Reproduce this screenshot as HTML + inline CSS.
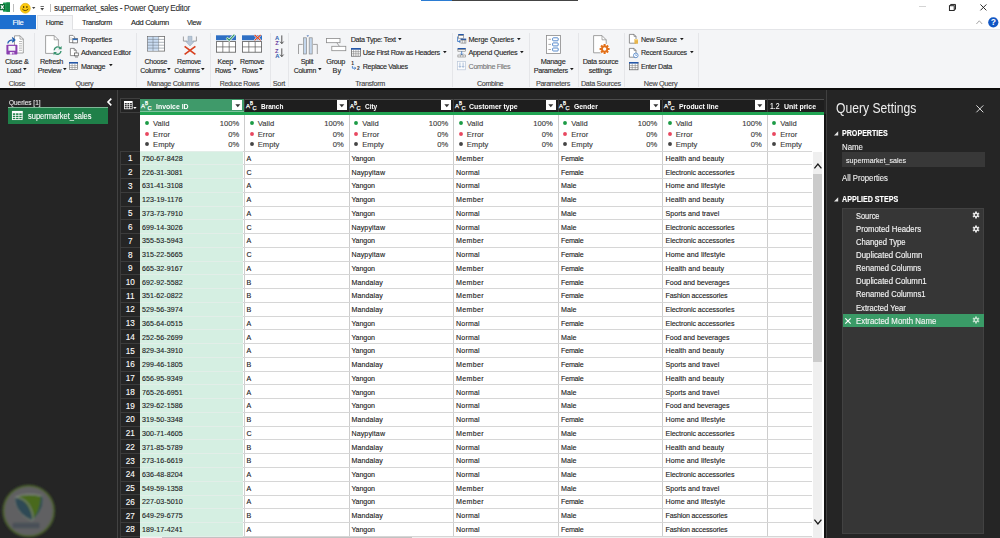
<!DOCTYPE html>
<html><head><meta charset="utf-8"><title>supermarket_sales - Power Query Editor</title>
<style>
html,body{margin:0;padding:0;}
body{width:1000px;height:538px;overflow:hidden;position:relative;background:#fff;font-family:"Liberation Sans",sans-serif;}
.b{position:absolute;}
.t{position:absolute;white-space:nowrap;-webkit-text-stroke:0.12px currentColor;}
.tc{transform:translateX(-50%);}
.tr{transform:translateX(-100%);}
svg{position:absolute;overflow:visible;}
</style></head><body>

<div class="b" style="left:421px;top:0px;width:31px;height:1.3px;background:#2b7cd3;"></div>
<div class="b" style="left:452px;top:0px;width:126px;height:1.3px;background:#444;"></div>
<svg style="left:0;top:2px" width="11" height="11" viewBox="0 0 11 11"><rect x="3" y="0.4" width="7" height="9.400" rx="0.6" fill="#1e9e55"/><path d="M6.400 0.4h3.600v9.400H6.400z" fill="#178a48"/><path d="M3 2.800h7M3 5.100h7M3 7.400h7" stroke="#0f7038" stroke-width="0.5" opacity="0.6"/><rect x="-1" y="2" width="6" height="6.200" rx="0.5" fill="#0d6b35"/><path d="M0.900 3.300l2.700 3.600M3.600 3.300L0.900 6.900" stroke="#fff" stroke-width="1.100"/></svg>
<div class="b" style="left:13px;top:3.6px;width:0.9px;height:8.2px;background:#bdbdbd;"></div>
<svg style="left:20.2px;top:2.5px" width="11" height="11" viewBox="0 0 11 11"><circle cx="5.3" cy="5.3" r="5" fill="#fbc80e" stroke="#d9a400" stroke-width="0.5"/><ellipse cx="3.7" cy="3.9" rx="0.65" ry="1" fill="#3a2a00"/><ellipse cx="6.9" cy="3.9" rx="0.65" ry="1" fill="#3a2a00"/><path d="M2.3 6q3 3.2 6 0" stroke="#3a2a00" stroke-width="0.8" fill="none"/></svg>
<svg style="left:32px;top:7px" width="4" height="3" viewBox="0 0 4 3"><path d="M0 0h3.4L1.7 2z" fill="#444"/></svg>
<svg style="left:39.5px;top:5.5px" width="5" height="5" viewBox="0 0 5 5"><path d="M0.5 0.5h3.4" stroke="#444" stroke-width="0.8"/><path d="M0.3 2h3.8L2.2 4.4z" fill="#444"/></svg>
<div class="b" style="left:50px;top:3.6px;width:0.9px;height:8.2px;background:#bdbdbd;"></div>
<span class="t" style="left:54px;top:3px;font-size:8.3px;line-height:10px;color:#2b2b2b;letter-spacing:-0.37px;-webkit-text-stroke:0.05px currentColor;">supermarket_sales - Power Query Editor</span>
<div class="b" style="left:919px;top:6.2px;width:7px;height:0.9px;background:#d4d4d4;"></div>
<svg style="left:949px;top:3.8px" width="7.2" height="7.2" viewBox="0 0 8 8"><path d="M1.8 1.8V0.5H7.2V5.9H5.9" fill="none" stroke="#222" stroke-width="1.1"/><rect x="0.5" y="1.9" width="5.3" height="5.3" fill="none" stroke="#222" stroke-width="1.1"/></svg>
<svg style="left:979.6px;top:3.8px" width="7" height="7" viewBox="0 0 8 8"><path d="M0.5 0.5L7.3 7.3M7.3 0.5L0.5 7.3" stroke="#222" stroke-width="1.1"/></svg>
<svg style="left:976px;top:20px" width="7" height="5" viewBox="0 0 7 5"><path d="M0.4 4L3.3 0.8L6.2 4" fill="none" stroke="#9a9a9a" stroke-width="0.9"/></svg>
<svg style="left:987.7px;top:17px" width="11" height="11" viewBox="0 0 11 11"><circle cx="5.3" cy="5.3" r="5.1" fill="#1157c4"/><text x="5.3" y="8.3" font-size="8.5" font-weight="700" fill="#fff" text-anchor="middle" font-family="Liberation Sans, sans-serif">?</text></svg>
<div class="b" style="left:0px;top:15px;width:36.3px;height:14.6px;background:#1e6fcf;"></div>
<span class="t tc" style="left:18px;top:18px;font-size:7.56px;line-height:9px;color:#fff;letter-spacing:-0.34px;">File</span>
<div class="b" style="left:37.3px;top:15.2px;width:35.5px;height:15px;background:#f4f5f7;border:1px solid #e0e1e3;border-bottom:none;box-sizing:border-box;"></div>
<span class="t tc" style="left:54.5px;top:19px;font-size:6.97px;line-height:7px;color:#222;letter-spacing:-0.314px;">Home</span>
<span class="t tc" style="left:97px;top:18px;font-size:7.26px;line-height:9px;color:#222;letter-spacing:-0.327px;">Transform</span>
<span class="t tc" style="left:150px;top:18px;font-size:7.49px;line-height:9px;color:#222;letter-spacing:-0.337px;">Add Column</span>
<span class="t tc" style="left:194px;top:19px;font-size:7.03px;line-height:7px;color:#222;letter-spacing:-0.316px;">View</span>
<div class="b" style="left:0px;top:29.2px;width:1000px;height:59.2px;background:#f4f5f7;border-top:1px solid #e4e5e8;box-sizing:border-box;"></div>
<div class="b" style="left:38.3px;top:29px;width:33.5px;height:2px;background:#f4f5f7;"></div>
<div class="b" style="left:34px;top:33px;width:1px;height:54px;background:#e5e6e9;"></div>
<div class="b" style="left:135.6px;top:33px;width:1px;height:54px;background:#e5e6e9;"></div>
<div class="b" style="left:209.5px;top:33px;width:1px;height:54px;background:#e5e6e9;"></div>
<div class="b" style="left:269.5px;top:33px;width:1px;height:54px;background:#e5e6e9;"></div>
<div class="b" style="left:288.4px;top:33px;width:1px;height:54px;background:#e5e6e9;"></div>
<div class="b" style="left:452px;top:33px;width:1px;height:54px;background:#e5e6e9;"></div>
<div class="b" style="left:529px;top:33px;width:1px;height:54px;background:#e5e6e9;"></div>
<div class="b" style="left:577.5px;top:33px;width:1px;height:54px;background:#e5e6e9;"></div>
<div class="b" style="left:624px;top:33px;width:1px;height:54px;background:#e5e6e9;"></div>
<div class="b" style="left:697.8px;top:33px;width:1px;height:54px;background:#e5e6e9;"></div>
<svg style="left:5.5px;top:34.5px" width="19" height="21" viewBox="0 0 19 21"><path d="M8.5 0.8h5.6l3.2 3.2v14H8.5z" fill="#fff" stroke="#8a8a8a" stroke-width="0.8"/><path d="M14 0.8v3.3h3.3" fill="none" stroke="#8a8a8a" stroke-width="0.7"/><path d="M13 6.5h3M13 8.7h3M13 10.9h3M13 13.1h3M13 15.3h3" stroke="#9a9a9a" stroke-width="0.7"/><rect x="0.4" y="9.8" width="11" height="9.800" rx="0.8" fill="#8a3fb0"/><rect x="2.400" y="10.900" width="7" height="4.800" fill="#f4f5f7"/><rect x="3.800" y="17" width="4.400" height="2.600" fill="#efe6f5"/><rect x="6.300" y="17.500" width="1.200" height="2.100" fill="#8a3fb0"/><path d="M1.8 8.5q0.5-3.6 6-3.6M6.2 2.6l2.6 2.3l-2.6 2.3" fill="none" stroke="#1f5fb0" stroke-width="1.3"/></svg>
<span class="t" style="left:4.9px;top:57px;font-size:7.3px;line-height:9px;color:#262626;letter-spacing:-0.271px;">Close &amp;</span>
<span class="t" style="left:6.7px;top:67px;font-size:7.02px;line-height:7px;color:#262626;letter-spacing:-0.316px;">Load</span>
<svg style="left:22.75px;top:68.3px" width="4" height="3" viewBox="0 0 4 3"><path d="M0 0h3.700L1.850 2.200z" fill="#1c1c1c"/></svg>
<span class="t" style="left:8.7px;top:80px;font-size:7.01px;line-height:7px;color:#444;letter-spacing:-0.316px;">Close</span>
<svg style="left:44.5px;top:34.5px" width="19" height="21" viewBox="0 0 19 21"><path d="M0.6 0.6h8.6l4.2 4.2v13.6H0.6z" fill="#fff" stroke="#8a8a8a" stroke-width="0.8"/><path d="M9.2 0.6v4.2h4.2" fill="none" stroke="#8a8a8a" stroke-width="0.7"/><circle cx="12.6" cy="15.6" r="4.6" fill="#f3f4f6"/><path d="M9.2 15.2a3.5 3.5 0 0 1 6-2.2" fill="none" stroke="#3a9470" stroke-width="1.4"/><path d="M16.6 10.9v3.4h-3.4z" fill="#3a9470"/><path d="M16 16a3.5 3.5 0 0 1-6 2.2" fill="none" stroke="#3a9470" stroke-width="1.4"/><path d="M8.6 20.3v-3.4h3.4z" fill="#3a9470"/></svg>
<span class="t" style="left:39.9px;top:57px;font-size:7.29px;line-height:9px;color:#262626;letter-spacing:-0.328px;">Refresh</span>
<span class="t" style="left:37.8px;top:67px;font-size:7.17px;line-height:8px;color:#262626;letter-spacing:-0.323px;">Preview</span>
<svg style="left:62.75px;top:68.3px" width="4" height="3" viewBox="0 0 4 3"><path d="M0 0h3.700L1.850 2.200z" fill="#1c1c1c"/></svg>
<svg style="left:69.3px;top:35px" width="9" height="8.5" viewBox="0 0 9 8.5"><path d="M0.4 0.4h3.6l1.6 1.6v5.6H0.4z" fill="#fff" stroke="#666" stroke-width="0.7"/><path d="M1.4 3h1.2M1.4 4.6h1.2" stroke="#777" stroke-width="0.6"/><rect x="3.8" y="3.6" width="4.7" height="4.3" fill="#fff" stroke="#555" stroke-width="0.7"/><rect x="3.8" y="3.6" width="4.7" height="1.5" fill="#2f6fc0"/></svg>
<span class="t" style="left:80.9px;top:35px;font-size:7.3px;line-height:9px;color:#262626;letter-spacing:-0.228px;">Properties</span>
<svg style="left:70px;top:48.3px" width="9" height="9.5" viewBox="0 0 9 9.5"><path d="M0.4 0.4h3.8l2 2v5.2H0.4z" fill="#fff" stroke="#666" stroke-width="0.7"/><path d="M4.2 0.4v2h2" fill="none" stroke="#666" stroke-width="0.6"/><rect x="4.5" y="5" width="3.8" height="2.8" fill="#fff" stroke="#555" stroke-width="0.7"/><path d="M5 9h3" stroke="#555" stroke-width="0.7"/></svg>
<span class="t" style="left:81px;top:48px;font-size:7.3px;line-height:9px;color:#262626;letter-spacing:-0.245px;">Advanced Editor</span>
<svg style="left:69.3px;top:62.3px" width="9" height="8" viewBox="0 0 9 8"><rect x="0.4" y="0.4" width="8.2" height="7" fill="#fff" stroke="#777" stroke-width="0.7"/><rect x="0" y="0" width="9" height="1.6" fill="#2457a8"/><path d="M0.4 3.6h8.2M0.4 5.5h8.2M3.1 1.6v5.8M5.9 1.6v5.8" stroke="#888" stroke-width="0.6"/></svg>
<span class="t" style="left:81px;top:62px;font-size:7.28px;line-height:9px;color:#262626;letter-spacing:-0.328px;">Manage</span>
<svg style="left:108.55px;top:64.3px" width="4" height="3" viewBox="0 0 4 3"><path d="M0 0h3.700L1.850 2.200z" fill="#1c1c1c"/></svg>
<span class="t" style="left:75.6px;top:80px;font-size:7.1px;line-height:8px;color:#444;letter-spacing:-0.32px;">Query</span>
<svg style="left:146.9px;top:36.1px" width="18" height="15.5" viewBox="0 0 18 15.5"><rect x="0.4" y="0.4" width="17.2" height="14.7" fill="#fff" stroke="#6e6e6e" stroke-width="0.8"/><rect x="0.8" y="0.8" width="10.6" height="13.9" fill="#c9dcf2"/><path d="M0.4 3.4h17.2M0.4 6.3h17.2M0.4 9.2h17.2M0.4 12.1h17.2M6 0.4v14.7M11.6 0.4v14.7" stroke="#707a86" stroke-width="0.55"/></svg>
<span class="t" style="left:144.5px;top:58px;font-size:7.1px;line-height:8px;color:#262626;letter-spacing:-0.319px;">Choose</span>
<span class="t" style="left:140.3px;top:67px;font-size:7.01px;line-height:7px;color:#262626;letter-spacing:-0.315px;">Columns</span>
<svg style="left:167.45px;top:68.3px" width="4" height="3" viewBox="0 0 4 3"><path d="M0 0h3.700L1.850 2.200z" fill="#1c1c1c"/></svg>
<svg style="left:182.6px;top:35.5px" width="14" height="19" viewBox="0 0 14 19"><path d="M0.4 0.5v4.6h3.8M13.4 0.5v4.6H9.8" fill="none" stroke="#8a8a8a" stroke-width="0.8"/><path d="M5 0.3h4v5.2h2.2L7 10L2.8 5.5H5z" fill="#b8c6d6" stroke="#8fa0b4" stroke-width="0.5"/><path d="M1.6 10.4l10.8 8M12.4 10.4l-10.8 8" stroke="#d8401f" stroke-width="1.7"/></svg>
<span class="t" style="left:177px;top:58px;font-size:6.91px;line-height:7px;color:#262626;letter-spacing:-0.311px;">Remove</span>
<span class="t" style="left:174.2px;top:67px;font-size:7.01px;line-height:7px;color:#262626;letter-spacing:-0.315px;">Columns</span>
<svg style="left:201.35px;top:68.3px" width="4" height="3" viewBox="0 0 4 3"><path d="M0 0h3.700L1.850 2.200z" fill="#1c1c1c"/></svg>
<span class="t" style="left:146.9px;top:79px;font-size:7.22px;line-height:9px;color:#444;letter-spacing:-0.325px;">Manage Columns</span>
<svg style="left:216px;top:35.3px" width="20" height="18" viewBox="0 0 20 18"><rect x="0.4" y="6.6" width="19.2" height="10.6" fill="#fff" stroke="#5a5a5a" stroke-width="0.8"/><path d="M0.4 11.9h19.2M6.8 6.6v10.6M13.2 6.6v10.6" stroke="#5a5a5a" stroke-width="0.7"/><rect x="0" y="0.3" width="20" height="4.9" fill="#2e6fc4"/><path d="M10.6 2.8l2.6 2.4l5.2-5.6" fill="none" stroke="#f3f4f6" stroke-width="2.6"/><path d="M10.6 2.8l2.6 2.4l5.2-5.6" fill="none" stroke="#2f9a63" stroke-width="1.2"/></svg>
<span class="t" style="left:217.6px;top:58px;font-size:7.07px;line-height:7px;color:#262626;letter-spacing:-0.318px;">Keep</span>
<span class="t" style="left:215px;top:67px;font-size:6.83px;line-height:7px;color:#262626;letter-spacing:-0.307px;">Rows</span>
<svg style="left:232.55px;top:68.3px" width="4" height="3" viewBox="0 0 4 3"><path d="M0 0h3.700L1.850 2.200z" fill="#1c1c1c"/></svg>
<svg style="left:242.1px;top:35.3px" width="20" height="18" viewBox="0 0 20 18"><rect x="0.4" y="6.6" width="19.2" height="10.6" fill="#fff" stroke="#5a5a5a" stroke-width="0.8"/><path d="M0.4 11.9h19.2M6.8 6.6v10.6M13.2 6.6v10.6" stroke="#5a5a5a" stroke-width="0.7"/><rect x="0" y="0.3" width="20" height="4.9" fill="#2e6fc4"/><path d="M12.6 0l6 5.4M18.6 0l-6 5.4" stroke="#f3f4f6" stroke-width="2.2"/><path d="M12.6 0l6 5.4M18.6 0l-6 5.4" stroke="#d8401f" stroke-width="1.1"/></svg>
<span class="t" style="left:240px;top:58px;font-size:6.94px;line-height:7px;color:#262626;letter-spacing:-0.312px;">Remove</span>
<span class="t" style="left:242px;top:67px;font-size:6.79px;line-height:7px;color:#262626;letter-spacing:-0.305px;">Rows</span>
<svg style="left:259.45px;top:68.3px" width="4" height="3" viewBox="0 0 4 3"><path d="M0 0h3.700L1.850 2.200z" fill="#1c1c1c"/></svg>
<span class="t" style="left:219.7px;top:80px;font-size:6.94px;line-height:7px;color:#444;letter-spacing:-0.312px;">Reduce Rows</span>
<svg style="left:275.3px;top:34.5px" width="9" height="10" viewBox="0 0 9 10"><g font-size="5.8" font-weight="700" font-family="Liberation Sans, sans-serif"><text x="0" y="4.5" fill="#2a5db0">A</text><text x="0.2" y="9.600" fill="#6a3fa0">Z</text></g><path d="M6.800 0.400v8.200M5 6.600l1.800 2l1.800-2" fill="none" stroke="#444" stroke-width="0.9"/></svg>
<svg style="left:275.3px;top:48px" width="9" height="10" viewBox="0 0 9 10"><g font-size="5.8" font-weight="700" font-family="Liberation Sans, sans-serif"><text x="0" y="4.5" fill="#6a3fa0">Z</text><text x="0.2" y="9.600" fill="#2a5db0">A</text></g><path d="M6.800 0.400v8.200M5 6.600l1.800 2l1.800-2" fill="none" stroke="#444" stroke-width="0.9"/></svg>
<span class="t" style="left:272.7px;top:79px;font-size:7.3px;line-height:9px;color:#444;letter-spacing:-0.226px;">Sort</span>
<svg style="left:297.9px;top:34.7px" width="20" height="19.5" viewBox="0 0 20 19.5"><path d="M8.5 0.4h2.6L9.8 1.8z" fill="#2457a8"/><path d="M0.5 19V9.4h4.2M19.3 19V9.4h-4.2" fill="none" stroke="#8a8a8a" stroke-width="0.8"/><rect x="5.6" y="2.8" width="3" height="16.2" fill="#c3d6ec" stroke="#8a8a8a" stroke-width="0.7"/><rect x="11.2" y="2.8" width="3" height="16.2" fill="#c3d6ec" stroke="#8a8a8a" stroke-width="0.7"/></svg>
<span class="t" style="left:300.7px;top:57px;font-size:7.23px;line-height:9px;color:#262626;letter-spacing:-0.325px;">Split</span>
<span class="t" style="left:293.7px;top:67px;font-size:7.03px;line-height:7px;color:#262626;letter-spacing:-0.317px;">Column</span>
<svg style="left:317.75px;top:68.3px" width="4" height="3" viewBox="0 0 4 3"><path d="M0 0h3.700L1.850 2.200z" fill="#1c1c1c"/></svg>
<svg style="left:325.9px;top:38.1px" width="21" height="13.5" viewBox="0 0 21 13.5"><rect x="0.5" y="0.5" width="13.5" height="4.2" fill="#fff" stroke="#8a8a8a" stroke-width="0.8"/><rect x="5.8" y="8.3" width="14" height="4.4" fill="#fff" stroke="#8a8a8a" stroke-width="0.8"/><path d="M10.800 4.700l2.600 3.600" stroke="#8a8a8a" stroke-width="0.8"/></svg>
<span class="t" style="left:326.3px;top:57px;font-size:7.3px;line-height:9px;color:#262626;letter-spacing:-0.328px;">Group</span>
<span class="t" style="left:332.6px;top:66px;font-size:7.3px;line-height:9px;color:#262626;">By</span>
<span class="t" style="left:350.7px;top:35px;font-size:7.24px;line-height:9px;color:#262626;letter-spacing:-0.326px;">Data Type: Text</span>
<svg style="left:398.45px;top:37.6px" width="4" height="3" viewBox="0 0 4 3"><path d="M0 0h3.700L1.850 2.200z" fill="#1c1c1c"/></svg>
<svg style="left:350.7px;top:48.3px" width="10" height="8.6" viewBox="0 0 10 8.6"><rect x="0.4" y="0.4" width="9" height="7.8" fill="#fff" stroke="#555" stroke-width="0.7"/><rect x="0" y="0" width="9.8" height="1.7" fill="#2457a8"/><path d="M0.4 3.7h9M0.4 5.8h9M2.6 1.7v6.5M4.9 1.7v6.5M7.2 1.7v6.5" stroke="#777" stroke-width="0.55"/></svg>
<span class="t" style="left:362.8px;top:48px;font-size:7.29px;line-height:9px;color:#262626;letter-spacing:-0.328px;">Use First Row as Headers</span>
<svg style="left:442.85px;top:51px" width="4" height="3" viewBox="0 0 4 3"><path d="M0 0h3.700L1.850 2.200z" fill="#1c1c1c"/></svg>
<svg style="left:351px;top:61.4px" width="10" height="9.6" viewBox="0 0 10 9.6"><text x="0.2" y="4.2" font-size="5" font-weight="700" fill="#333" font-family="Liberation Sans, sans-serif">1</text><text x="6" y="9.4" font-size="5" font-weight="700" fill="#333" font-family="Liberation Sans, sans-serif">2</text><path d="M1.4 5v2.2h3.2M3.4 5.8l1.4 1.4l-1.4 1.4" fill="none" stroke="#2f6fc0" stroke-width="0.8"/></svg>
<span class="t" style="left:362.8px;top:63px;font-size:7.13px;line-height:8px;color:#262626;letter-spacing:-0.321px;">Replace Values</span>
<span class="t" style="left:355.3px;top:79px;font-size:7.23px;line-height:9px;color:#444;letter-spacing:-0.325px;">Transform</span>
<svg style="left:456.6px;top:34.3px" width="9.5" height="9.6" viewBox="0 0 9.5 9.6"><rect x="1.2" y="0" width="5.6" height="1.6" fill="#2457a8"/><rect x="1.5" y="1.6" width="5" height="2.6" fill="#fff" stroke="#777" stroke-width="0.6"/><rect x="3.6" y="4.6" width="5.6" height="1.5" fill="#2457a8"/><rect x="3.9" y="6.1" width="5" height="3" fill="#fff" stroke="#777" stroke-width="0.6"/><path d="M5.6 6.1v3M7.4 6.1v3" stroke="#777" stroke-width="0.5"/><path d="M0.6 2.5v5h2.4M2 6.4l1.2 1.1L2 8.6" fill="none" stroke="#2f6fc0" stroke-width="0.8"/></svg>
<span class="t" style="left:468.5px;top:35px;font-size:7.3px;line-height:9px;color:#262626;letter-spacing:-0.221px;">Merge Queries</span>
<svg style="left:516.65px;top:37.6px" width="4" height="3" viewBox="0 0 4 3"><path d="M0 0h3.700L1.850 2.200z" fill="#1c1c1c"/></svg>
<svg style="left:456.6px;top:47.9px" width="9.5" height="9.4" viewBox="0 0 9.5 9.4"><rect x="0.6" y="0" width="8.2" height="1.6" fill="#2457a8"/><rect x="0.9" y="1.6" width="7.6" height="1.6" fill="#fff" stroke="#777" stroke-width="0.6"/><path d="M4.7 3.2v3.6M3.4 5.6l1.3 1.3L6 5.6" fill="none" stroke="#2f6fc0" stroke-width="0.8"/><rect x="0.9" y="7" width="7.6" height="2" fill="#fff" stroke="#777" stroke-width="0.6"/><path d="M3.4 7v2M6 7v2" stroke="#777" stroke-width="0.5"/></svg>
<span class="t" style="left:468.5px;top:48px;font-size:7.3px;line-height:9px;color:#262626;letter-spacing:-0.278px;">Append Queries</span>
<svg style="left:520.45px;top:51px" width="4" height="3" viewBox="0 0 4 3"><path d="M0 0h3.700L1.850 2.200z" fill="#1c1c1c"/></svg>
<svg style="left:457px;top:61.3px" width="9" height="9.2" viewBox="0 0 9 9.2"><rect x="0.4" y="0.4" width="8.2" height="8.4" fill="#fbfcfd" stroke="#b9c6d8" stroke-width="0.7"/><path d="M2.9 1.6v4.6M1.7 5l1.2 1.4L4.1 5M6.1 1.6v4.6M4.9 5l1.2 1.4L7.3 5" fill="none" stroke="#8aa6cc" stroke-width="0.7"/></svg>
<span class="t" style="left:468.5px;top:62px;font-size:7.21px;line-height:9px;color:#777;letter-spacing:-0.324px;">Combine Files</span>
<span class="t" style="left:476.9px;top:80px;font-size:7.17px;line-height:8px;color:#444;letter-spacing:-0.323px;">Combine</span>
<svg style="left:546px;top:35px" width="15" height="19" viewBox="0 0 15 19"><rect x="0.5" y="0.5" width="14" height="18" fill="#fff" stroke="#8a8a8a" stroke-width="0.8"/><path d="M2.4 4.3h2.6M2.4 9.4h2.6M2.4 14.5h2.6" stroke="#8a8a8a" stroke-width="0.7"/><rect x="6.6" y="2.8" width="5.6" height="3" rx="0.8" fill="#fff" stroke="#2f6fc0" stroke-width="0.8"/><rect x="6.6" y="7.9" width="5.6" height="3" rx="0.8" fill="#fff" stroke="#2f6fc0" stroke-width="0.8"/><rect x="6.6" y="13" width="5.6" height="3" rx="0.8" fill="#fff" stroke="#2f6fc0" stroke-width="0.8"/></svg>
<span class="t" style="left:540.7px;top:57px;font-size:7.3px;line-height:9px;color:#262626;letter-spacing:-0.268px;">Manage</span>
<span class="t" style="left:533.7px;top:66px;font-size:7.26px;line-height:9px;color:#262626;letter-spacing:-0.327px;">Parameters</span>
<svg style="left:569.65px;top:68.3px" width="4" height="3" viewBox="0 0 4 3"><path d="M0 0h3.700L1.850 2.200z" fill="#1c1c1c"/></svg>
<span class="t" style="left:535.9px;top:79px;font-size:7.22px;line-height:9px;color:#444;letter-spacing:-0.325px;">Parameters</span>
<svg style="left:593.3px;top:34.7px" width="17" height="20" viewBox="0 0 17 20"><path d="M0.6 0.6h8.4l4.2 4.2v13H0.6z" fill="#fff" stroke="#8a8a8a" stroke-width="0.8"/><path d="M9 0.6v4.2h4.2" fill="none" stroke="#8a8a8a" stroke-width="0.7"/><circle cx="11.6" cy="14" r="5.6" fill="#fff"/><g transform="translate(11.6,14)"><g fill="#e2701a"><circle r="3.5"/><rect x="-1.05" y="-5" width="2.1" height="10" transform="rotate(0)"/><rect x="-1.05" y="-5" width="2.1" height="10" transform="rotate(45)"/><rect x="-1.05" y="-5" width="2.1" height="10" transform="rotate(90)"/><rect x="-1.05" y="-5" width="2.1" height="10" transform="rotate(135)"/></g><circle r="1.7" fill="#fff"/></g></svg>
<span class="t" style="left:582.7px;top:57px;font-size:7.28px;line-height:9px;color:#262626;letter-spacing:-0.328px;">Data source</span>
<span class="t" style="left:588.7px;top:66px;font-size:7.3px;line-height:9px;color:#262626;letter-spacing:-0.274px;">settings</span>
<span class="t" style="left:581px;top:79px;font-size:7.2px;line-height:9px;color:#444;letter-spacing:-0.324px;">Data Sources</span>
<svg style="left:629.3px;top:34.3px" width="9.5" height="10" viewBox="0 0 9.5 10"><path d="M0.4 0.4h4.6l2 2v6.8H0.4z" fill="#fff" stroke="#666" stroke-width="0.7"/><path d="M5 0.4v2h2" fill="none" stroke="#666" stroke-width="0.6"/><rect x="5.4" y="5" width="3.6" height="4.8" rx="0.6" fill="#e8b54a"/><rect x="5.4" y="5" width="3.6" height="1.2" fill="#f6d98c"/></svg>
<span class="t" style="left:641px;top:36px;font-size:7.11px;line-height:8px;color:#262626;letter-spacing:-0.32px;">New Source</span>
<svg style="left:679.65px;top:37.6px" width="4" height="3" viewBox="0 0 4 3"><path d="M0 0h3.700L1.850 2.200z" fill="#1c1c1c"/></svg>
<svg style="left:629.3px;top:47.7px" width="9.5" height="10" viewBox="0 0 9.5 10"><path d="M0.4 0.4h4.6l2 2v6.8H0.4z" fill="#fff" stroke="#666" stroke-width="0.7"/><path d="M5 0.4v2h2" fill="none" stroke="#666" stroke-width="0.6"/><circle cx="6.8" cy="7.4" r="2.3" fill="#fff" stroke="#2f6fc0" stroke-width="0.7"/><path d="M6.8 6.2v1.3h1" fill="none" stroke="#2f6fc0" stroke-width="0.6"/></svg>
<span class="t" style="left:641px;top:49px;font-size:7.07px;line-height:7px;color:#262626;letter-spacing:-0.318px;">Recent Sources</span>
<svg style="left:689.65px;top:51px" width="4" height="3" viewBox="0 0 4 3"><path d="M0 0h3.700L1.850 2.200z" fill="#1c1c1c"/></svg>
<svg style="left:629.3px;top:62.2px" width="9.5" height="8.2" viewBox="0 0 9.5 8.2"><rect x="0.4" y="0.4" width="8.6" height="7.4" fill="#fff" stroke="#555" stroke-width="0.7"/><rect x="0" y="0" width="9.4" height="1.6" fill="#2457a8"/><path d="M0.4 3.6h8.6M0.4 5.6h8.6M3.2 1.6v6.2M6.2 1.6v6.2" stroke="#777" stroke-width="0.55"/></svg>
<span class="t" style="left:641px;top:63px;font-size:7.15px;line-height:8px;color:#262626;letter-spacing:-0.322px;">Enter Data</span>
<span class="t" style="left:643.8px;top:79px;font-size:7.28px;line-height:9px;color:#444;letter-spacing:-0.327px;">New Query</span>
<div class="b" style="left:0px;top:88.4px;width:1000px;height:450px;background:#252525;"></div>
<div class="b" style="left:0px;top:88.4px;width:1000px;height:1.4px;background:#0c0c0c;"></div>
<div class="b" style="left:117.3px;top:90px;width:0.9px;height:448px;background:#424242;"></div>
<div class="b" style="left:120.1px;top:112.6px;width:0.8px;height:426px;background:#3a3a3a;"></div>
<span class="t" style="left:8.5px;top:98px;font-size:7.8px;line-height:9px;color:#e8e8e8;transform:scaleX(0.8259);transform-origin:0 0;">Queries [1]</span>
<svg style="left:106.5px;top:97.5px" width="5" height="8" viewBox="0 0 5 8"><path d="M4.3 0.6L1 4L4.3 7.4" fill="none" stroke="#fff" stroke-width="1.6"/></svg>
<div class="b" style="left:8px;top:107.4px;width:100px;height:17px;background:#1f8049;border-top:1px solid #7fb897;box-sizing:border-box;"></div>
<svg style="left:12px;top:111.3px" width="10.5" height="9" viewBox="0 0 10.5 9"><rect x="0.4" y="0.4" width="9.7" height="8.2" fill="none" stroke="#fff" stroke-width="0.9"/><rect x="0" y="0" width="10.5" height="2.3" fill="#fff"/><path d="M0 4.4h10.5M0 6.5h10.5M3.6 2v6.6M6.9 2v6.6" stroke="#fff" stroke-width="0.8"/></svg>
<span class="t" style="left:27.5px;top:111px;font-size:8.5px;line-height:10px;color:#fff;transform:scaleX(0.8842);transform-origin:0 0;">supermarket_sales</span>
<div class="b" style="left:139.8px;top:98.6px;width:683.8px;height:439.4px;background:#fff;"></div>
<div class="b" style="left:139.8px;top:98.6px;width:683.8px;height:13.6px;background:#1e1e1e;border-top:0.8px solid #4c4c4c;box-sizing:border-box;"></div>
<div class="b" style="left:120.3px;top:98.4px;width:19.5px;height:14.2px;background:#232323;border:0.8px solid #3e3e3e;border-right:none;box-sizing:border-box;"></div>
<div class="b" style="left:120.3px;top:112.6px;width:19.5px;height:38.4px;background:#262626;"></div>
<div class="b" style="left:139.8px;top:98.6px;width:104.6px;height:13.6px;background:#3f9a6a;"></div>
<div class="b" style="left:139.8px;top:111.3px;width:104.6px;height:0.9px;background:#7fc29e;"></div>
<div class="b" style="left:139.8px;top:112.2px;width:683.8px;height:2.6px;background:#21a453;"></div>
<svg style="left:123.9px;top:100.9px" width="13" height="9" viewBox="0 0 13 9"><rect x="0" y="0" width="8.600" height="8.200" fill="#fff"/><path d="M0.700 2.900h7.200M0.700 4.700h7.200M0.700 6.500h7.200" stroke="#fff" stroke-width="0"/><g fill="#1e1e1e"><rect x="0.800" y="2.100" width="1.900" height="1.300"/><rect x="3.400" y="2.100" width="1.900" height="1.300"/><rect x="6" y="2.100" width="1.900" height="1.300"/><rect x="0.800" y="4.100" width="1.900" height="1.300"/><rect x="3.400" y="4.100" width="1.900" height="1.300"/><rect x="6" y="4.100" width="1.900" height="1.300"/><rect x="0.800" y="6.100" width="1.900" height="1.300"/><rect x="3.400" y="6.100" width="1.900" height="1.300"/><rect x="6" y="6.100" width="1.900" height="1.300"/></g><path d="M9.200 6h3.400l-1.700 2z" fill="#fff"/></svg>
<div class="b" style="left:139.8px;top:151px;width:103.2px;height:386px;background:#d5efe2;"></div>
<div class="b" style="left:244.1px;top:114.8px;width:0.9px;height:423px;background:#cdcdcd;"></div>
<div class="b" style="left:244.1px;top:99.4px;width:0.8px;height:12.8px;background:#3a3a3a;"></div>
<div class="b" style="left:348.6px;top:114.8px;width:0.9px;height:423px;background:#cdcdcd;"></div>
<div class="b" style="left:348.6px;top:99.4px;width:0.8px;height:12.8px;background:#3a3a3a;"></div>
<div class="b" style="left:453.1px;top:114.8px;width:0.9px;height:423px;background:#cdcdcd;"></div>
<div class="b" style="left:453.1px;top:99.4px;width:0.8px;height:12.8px;background:#3a3a3a;"></div>
<div class="b" style="left:557.6px;top:114.8px;width:0.9px;height:423px;background:#cdcdcd;"></div>
<div class="b" style="left:557.6px;top:99.4px;width:0.8px;height:12.8px;background:#3a3a3a;"></div>
<div class="b" style="left:662.1px;top:114.8px;width:0.9px;height:423px;background:#cdcdcd;"></div>
<div class="b" style="left:662.1px;top:99.4px;width:0.8px;height:12.8px;background:#3a3a3a;"></div>
<div class="b" style="left:766.6px;top:114.8px;width:0.9px;height:423px;background:#cdcdcd;"></div>
<div class="b" style="left:766.6px;top:99.4px;width:0.8px;height:12.8px;background:#3a3a3a;"></div>
<div class="b" style="left:139.8px;top:150.6px;width:672.4px;height:0.8px;background:#d6d6d6;"></div>
<div class="b" style="left:120.3px;top:150.5px;width:19.5px;height:1px;background:#3c3c3c;"></div>
<div class="b" style="left:139.8px;top:150.6px;width:103.2px;height:0.8px;background:#e2eee8;"></div>
<div class="b" style="left:139.8px;top:164.357px;width:672.4px;height:0.8px;background:#d6d6d6;"></div>
<div class="b" style="left:120.3px;top:164.257px;width:19.5px;height:1px;background:#3c3c3c;"></div>
<div class="b" style="left:139.8px;top:164.357px;width:103.2px;height:0.8px;background:#e2eee8;"></div>
<div class="b" style="left:139.8px;top:178.114px;width:672.4px;height:0.8px;background:#d6d6d6;"></div>
<div class="b" style="left:120.3px;top:178.014px;width:19.5px;height:1px;background:#3c3c3c;"></div>
<div class="b" style="left:139.8px;top:178.114px;width:103.2px;height:0.8px;background:#e2eee8;"></div>
<div class="b" style="left:139.8px;top:191.871px;width:672.4px;height:0.8px;background:#d6d6d6;"></div>
<div class="b" style="left:120.3px;top:191.771px;width:19.5px;height:1px;background:#3c3c3c;"></div>
<div class="b" style="left:139.8px;top:191.871px;width:103.2px;height:0.8px;background:#e2eee8;"></div>
<div class="b" style="left:139.8px;top:205.628px;width:672.4px;height:0.8px;background:#d6d6d6;"></div>
<div class="b" style="left:120.3px;top:205.528px;width:19.5px;height:1px;background:#3c3c3c;"></div>
<div class="b" style="left:139.8px;top:205.628px;width:103.2px;height:0.8px;background:#e2eee8;"></div>
<div class="b" style="left:139.8px;top:219.385px;width:672.4px;height:0.8px;background:#d6d6d6;"></div>
<div class="b" style="left:120.3px;top:219.285px;width:19.5px;height:1px;background:#3c3c3c;"></div>
<div class="b" style="left:139.8px;top:219.385px;width:103.2px;height:0.8px;background:#e2eee8;"></div>
<div class="b" style="left:139.8px;top:233.142px;width:672.4px;height:0.8px;background:#d6d6d6;"></div>
<div class="b" style="left:120.3px;top:233.042px;width:19.5px;height:1px;background:#3c3c3c;"></div>
<div class="b" style="left:139.8px;top:233.142px;width:103.2px;height:0.8px;background:#e2eee8;"></div>
<div class="b" style="left:139.8px;top:246.899px;width:672.4px;height:0.8px;background:#d6d6d6;"></div>
<div class="b" style="left:120.3px;top:246.799px;width:19.5px;height:1px;background:#3c3c3c;"></div>
<div class="b" style="left:139.8px;top:246.899px;width:103.2px;height:0.8px;background:#e2eee8;"></div>
<div class="b" style="left:139.8px;top:260.656px;width:672.4px;height:0.8px;background:#d6d6d6;"></div>
<div class="b" style="left:120.3px;top:260.556px;width:19.5px;height:1px;background:#3c3c3c;"></div>
<div class="b" style="left:139.8px;top:260.656px;width:103.2px;height:0.8px;background:#e2eee8;"></div>
<div class="b" style="left:139.8px;top:274.413px;width:672.4px;height:0.8px;background:#d6d6d6;"></div>
<div class="b" style="left:120.3px;top:274.313px;width:19.5px;height:1px;background:#3c3c3c;"></div>
<div class="b" style="left:139.8px;top:274.413px;width:103.2px;height:0.8px;background:#e2eee8;"></div>
<div class="b" style="left:139.8px;top:288.17px;width:672.4px;height:0.8px;background:#d6d6d6;"></div>
<div class="b" style="left:120.3px;top:288.07px;width:19.5px;height:1px;background:#3c3c3c;"></div>
<div class="b" style="left:139.8px;top:288.17px;width:103.2px;height:0.8px;background:#e2eee8;"></div>
<div class="b" style="left:139.8px;top:301.927px;width:672.4px;height:0.8px;background:#d6d6d6;"></div>
<div class="b" style="left:120.3px;top:301.827px;width:19.5px;height:1px;background:#3c3c3c;"></div>
<div class="b" style="left:139.8px;top:301.927px;width:103.2px;height:0.8px;background:#e2eee8;"></div>
<div class="b" style="left:139.8px;top:315.684px;width:672.4px;height:0.8px;background:#d6d6d6;"></div>
<div class="b" style="left:120.3px;top:315.584px;width:19.5px;height:1px;background:#3c3c3c;"></div>
<div class="b" style="left:139.8px;top:315.684px;width:103.2px;height:0.8px;background:#e2eee8;"></div>
<div class="b" style="left:139.8px;top:329.441px;width:672.4px;height:0.8px;background:#d6d6d6;"></div>
<div class="b" style="left:120.3px;top:329.341px;width:19.5px;height:1px;background:#3c3c3c;"></div>
<div class="b" style="left:139.8px;top:329.441px;width:103.2px;height:0.8px;background:#e2eee8;"></div>
<div class="b" style="left:139.8px;top:343.198px;width:672.4px;height:0.8px;background:#d6d6d6;"></div>
<div class="b" style="left:120.3px;top:343.098px;width:19.5px;height:1px;background:#3c3c3c;"></div>
<div class="b" style="left:139.8px;top:343.198px;width:103.2px;height:0.8px;background:#e2eee8;"></div>
<div class="b" style="left:139.8px;top:356.955px;width:672.4px;height:0.8px;background:#d6d6d6;"></div>
<div class="b" style="left:120.3px;top:356.855px;width:19.5px;height:1px;background:#3c3c3c;"></div>
<div class="b" style="left:139.8px;top:356.955px;width:103.2px;height:0.8px;background:#e2eee8;"></div>
<div class="b" style="left:139.8px;top:370.712px;width:672.4px;height:0.8px;background:#d6d6d6;"></div>
<div class="b" style="left:120.3px;top:370.612px;width:19.5px;height:1px;background:#3c3c3c;"></div>
<div class="b" style="left:139.8px;top:370.712px;width:103.2px;height:0.8px;background:#e2eee8;"></div>
<div class="b" style="left:139.8px;top:384.469px;width:672.4px;height:0.8px;background:#d6d6d6;"></div>
<div class="b" style="left:120.3px;top:384.369px;width:19.5px;height:1px;background:#3c3c3c;"></div>
<div class="b" style="left:139.8px;top:384.469px;width:103.2px;height:0.8px;background:#e2eee8;"></div>
<div class="b" style="left:139.8px;top:398.226px;width:672.4px;height:0.8px;background:#d6d6d6;"></div>
<div class="b" style="left:120.3px;top:398.126px;width:19.5px;height:1px;background:#3c3c3c;"></div>
<div class="b" style="left:139.8px;top:398.226px;width:103.2px;height:0.8px;background:#e2eee8;"></div>
<div class="b" style="left:139.8px;top:411.983px;width:672.4px;height:0.8px;background:#d6d6d6;"></div>
<div class="b" style="left:120.3px;top:411.883px;width:19.5px;height:1px;background:#3c3c3c;"></div>
<div class="b" style="left:139.8px;top:411.983px;width:103.2px;height:0.8px;background:#e2eee8;"></div>
<div class="b" style="left:139.8px;top:425.74px;width:672.4px;height:0.8px;background:#d6d6d6;"></div>
<div class="b" style="left:120.3px;top:425.64px;width:19.5px;height:1px;background:#3c3c3c;"></div>
<div class="b" style="left:139.8px;top:425.74px;width:103.2px;height:0.8px;background:#e2eee8;"></div>
<div class="b" style="left:139.8px;top:439.497px;width:672.4px;height:0.8px;background:#d6d6d6;"></div>
<div class="b" style="left:120.3px;top:439.397px;width:19.5px;height:1px;background:#3c3c3c;"></div>
<div class="b" style="left:139.8px;top:439.497px;width:103.2px;height:0.8px;background:#e2eee8;"></div>
<div class="b" style="left:139.8px;top:453.254px;width:672.4px;height:0.8px;background:#d6d6d6;"></div>
<div class="b" style="left:120.3px;top:453.154px;width:19.5px;height:1px;background:#3c3c3c;"></div>
<div class="b" style="left:139.8px;top:453.254px;width:103.2px;height:0.8px;background:#e2eee8;"></div>
<div class="b" style="left:139.8px;top:467.011px;width:672.4px;height:0.8px;background:#d6d6d6;"></div>
<div class="b" style="left:120.3px;top:466.911px;width:19.5px;height:1px;background:#3c3c3c;"></div>
<div class="b" style="left:139.8px;top:467.011px;width:103.2px;height:0.8px;background:#e2eee8;"></div>
<div class="b" style="left:139.8px;top:480.768px;width:672.4px;height:0.8px;background:#d6d6d6;"></div>
<div class="b" style="left:120.3px;top:480.668px;width:19.5px;height:1px;background:#3c3c3c;"></div>
<div class="b" style="left:139.8px;top:480.768px;width:103.2px;height:0.8px;background:#e2eee8;"></div>
<div class="b" style="left:139.8px;top:494.525px;width:672.4px;height:0.8px;background:#d6d6d6;"></div>
<div class="b" style="left:120.3px;top:494.425px;width:19.5px;height:1px;background:#3c3c3c;"></div>
<div class="b" style="left:139.8px;top:494.525px;width:103.2px;height:0.8px;background:#e2eee8;"></div>
<div class="b" style="left:139.8px;top:508.282px;width:672.4px;height:0.8px;background:#d6d6d6;"></div>
<div class="b" style="left:120.3px;top:508.182px;width:19.5px;height:1px;background:#3c3c3c;"></div>
<div class="b" style="left:139.8px;top:508.282px;width:103.2px;height:0.8px;background:#e2eee8;"></div>
<div class="b" style="left:139.8px;top:522.039px;width:672.4px;height:0.8px;background:#d6d6d6;"></div>
<div class="b" style="left:120.3px;top:521.939px;width:19.5px;height:1px;background:#3c3c3c;"></div>
<div class="b" style="left:139.8px;top:522.039px;width:103.2px;height:0.8px;background:#e2eee8;"></div>
<div class="b" style="left:139.8px;top:535.796px;width:672.4px;height:0.8px;background:#d6d6d6;"></div>
<div class="b" style="left:120.3px;top:535.696px;width:19.5px;height:1px;background:#3c3c3c;"></div>
<div class="b" style="left:139.8px;top:535.796px;width:103.2px;height:0.8px;background:#e2eee8;"></div>
<svg style="left:141.1px;top:100.8px" width="12" height="11" viewBox="0 0 12 11"><g fill="#fff" stroke="#fff" stroke-width="0.25" font-family="Liberation Sans, sans-serif"><text x="0" y="6.800" font-size="5.900">A</text><text x="4" y="4" font-size="4.500">B</text><text x="6.500" y="8.500" font-size="5.700">C</text></g></svg>
<span class="t" style="left:155.6px;top:102px;font-size:7.6px;line-height:9px;color:#fff;font-weight:700;transform:scaleX(0.9087);transform-origin:0 0;-webkit-text-stroke:0;">Invoice ID</span>
<div class="b" style="left:232.3px;top:100px;width:10.2px;height:9.9px;background:#fff;"></div>
<svg style="left:234.5px;top:104px" width="6" height="4" viewBox="0 0 6 4"><path d="M0.3 0.3h5L2.8 3.2z" fill="#333"/></svg>
<svg style="left:145px;top:121.4px" width="4" height="4" viewBox="0 0 4 4"><circle cx="2" cy="2" r="1.95" fill="#1c9b45"/></svg>
<span class="t" style="left:153.1px;top:119px;font-size:7.6px;line-height:9px;color:#3a3a3a;">Valid</span>
<span class="t tr" style="left:239.2px;top:119px;font-size:7.6px;line-height:9px;color:#3a3a3a;">100%</span>
<svg style="left:145px;top:131.9px" width="4" height="4" viewBox="0 0 4 4"><circle cx="2" cy="2" r="1.95" fill="#e8475f"/></svg>
<span class="t" style="left:153.1px;top:130px;font-size:7.6px;line-height:9px;color:#3a3a3a;">Error</span>
<span class="t tr" style="left:239.2px;top:130px;font-size:7.6px;line-height:9px;color:#3a3a3a;">0%</span>
<svg style="left:145px;top:142.4px" width="4" height="4" viewBox="0 0 4 4"><circle cx="2" cy="2" r="1.95" fill="#444"/></svg>
<span class="t" style="left:153.1px;top:140px;font-size:7.6px;line-height:9px;color:#3a3a3a;">Empty</span>
<span class="t tr" style="left:239.2px;top:140px;font-size:7.6px;line-height:9px;color:#3a3a3a;">0%</span>
<svg style="left:245.8px;top:100.8px" width="12" height="11" viewBox="0 0 12 11"><g fill="#fff" stroke="#fff" stroke-width="0.25" font-family="Liberation Sans, sans-serif"><text x="0" y="6.800" font-size="5.900">A</text><text x="4" y="4" font-size="4.500">B</text><text x="6.500" y="8.500" font-size="5.700">C</text></g></svg>
<span class="t" style="left:260.6px;top:102px;font-size:7.6px;line-height:9px;color:#fff;font-weight:700;transform:scaleX(0.8559);transform-origin:0 0;-webkit-text-stroke:0;">Branch</span>
<div class="b" style="left:336.8px;top:100px;width:10.2px;height:9.9px;background:#fff;"></div>
<svg style="left:339px;top:104px" width="6" height="4" viewBox="0 0 6 4"><path d="M0.3 0.3h5L2.8 3.2z" fill="#333"/></svg>
<svg style="left:249.7px;top:121.4px" width="4" height="4" viewBox="0 0 4 4"><circle cx="2" cy="2" r="1.95" fill="#1c9b45"/></svg>
<span class="t" style="left:257.8px;top:119px;font-size:7.6px;line-height:9px;color:#3a3a3a;">Valid</span>
<span class="t tr" style="left:343.7px;top:119px;font-size:7.6px;line-height:9px;color:#3a3a3a;">100%</span>
<svg style="left:249.7px;top:131.9px" width="4" height="4" viewBox="0 0 4 4"><circle cx="2" cy="2" r="1.95" fill="#e8475f"/></svg>
<span class="t" style="left:257.8px;top:130px;font-size:7.6px;line-height:9px;color:#3a3a3a;">Error</span>
<span class="t tr" style="left:343.7px;top:130px;font-size:7.6px;line-height:9px;color:#3a3a3a;">0%</span>
<svg style="left:249.7px;top:142.4px" width="4" height="4" viewBox="0 0 4 4"><circle cx="2" cy="2" r="1.95" fill="#444"/></svg>
<span class="t" style="left:257.8px;top:140px;font-size:7.6px;line-height:9px;color:#3a3a3a;">Empty</span>
<span class="t tr" style="left:343.7px;top:140px;font-size:7.6px;line-height:9px;color:#3a3a3a;">0%</span>
<svg style="left:350.3px;top:100.8px" width="12" height="11" viewBox="0 0 12 11"><g fill="#fff" stroke="#fff" stroke-width="0.25" font-family="Liberation Sans, sans-serif"><text x="0" y="6.800" font-size="5.900">A</text><text x="4" y="4" font-size="4.500">B</text><text x="6.500" y="8.500" font-size="5.700">C</text></g></svg>
<span class="t" style="left:365px;top:102px;font-size:7.6px;line-height:9px;color:#fff;font-weight:700;transform:scaleX(0.8496);transform-origin:0 0;-webkit-text-stroke:0;">City</span>
<div class="b" style="left:441.3px;top:100px;width:10.2px;height:9.9px;background:#fff;"></div>
<svg style="left:443.5px;top:104px" width="6" height="4" viewBox="0 0 6 4"><path d="M0.3 0.3h5L2.8 3.2z" fill="#333"/></svg>
<svg style="left:354.2px;top:121.4px" width="4" height="4" viewBox="0 0 4 4"><circle cx="2" cy="2" r="1.95" fill="#1c9b45"/></svg>
<span class="t" style="left:362.3px;top:119px;font-size:7.6px;line-height:9px;color:#3a3a3a;">Valid</span>
<span class="t tr" style="left:448.2px;top:119px;font-size:7.6px;line-height:9px;color:#3a3a3a;">100%</span>
<svg style="left:354.2px;top:131.9px" width="4" height="4" viewBox="0 0 4 4"><circle cx="2" cy="2" r="1.95" fill="#e8475f"/></svg>
<span class="t" style="left:362.3px;top:130px;font-size:7.6px;line-height:9px;color:#3a3a3a;">Error</span>
<span class="t tr" style="left:448.2px;top:130px;font-size:7.6px;line-height:9px;color:#3a3a3a;">0%</span>
<svg style="left:354.2px;top:142.4px" width="4" height="4" viewBox="0 0 4 4"><circle cx="2" cy="2" r="1.95" fill="#444"/></svg>
<span class="t" style="left:362.3px;top:140px;font-size:7.6px;line-height:9px;color:#3a3a3a;">Empty</span>
<span class="t tr" style="left:448.2px;top:140px;font-size:7.6px;line-height:9px;color:#3a3a3a;">0%</span>
<svg style="left:454.8px;top:100.8px" width="12" height="11" viewBox="0 0 12 11"><g fill="#fff" stroke="#fff" stroke-width="0.25" font-family="Liberation Sans, sans-serif"><text x="0" y="6.800" font-size="5.900">A</text><text x="4" y="4" font-size="4.500">B</text><text x="6.500" y="8.500" font-size="5.700">C</text></g></svg>
<span class="t" style="left:469.3px;top:102px;font-size:7.6px;line-height:9px;color:#fff;font-weight:700;transform:scaleX(0.9159);transform-origin:0 0;-webkit-text-stroke:0;">Customer type</span>
<div class="b" style="left:545.8px;top:100px;width:10.2px;height:9.9px;background:#fff;"></div>
<svg style="left:548px;top:104px" width="6" height="4" viewBox="0 0 6 4"><path d="M0.3 0.3h5L2.8 3.2z" fill="#333"/></svg>
<svg style="left:458.7px;top:121.4px" width="4" height="4" viewBox="0 0 4 4"><circle cx="2" cy="2" r="1.95" fill="#1c9b45"/></svg>
<span class="t" style="left:466.8px;top:119px;font-size:7.6px;line-height:9px;color:#3a3a3a;">Valid</span>
<span class="t tr" style="left:552.7px;top:119px;font-size:7.6px;line-height:9px;color:#3a3a3a;">100%</span>
<svg style="left:458.7px;top:131.9px" width="4" height="4" viewBox="0 0 4 4"><circle cx="2" cy="2" r="1.95" fill="#e8475f"/></svg>
<span class="t" style="left:466.8px;top:130px;font-size:7.6px;line-height:9px;color:#3a3a3a;">Error</span>
<span class="t tr" style="left:552.7px;top:130px;font-size:7.6px;line-height:9px;color:#3a3a3a;">0%</span>
<svg style="left:458.7px;top:142.4px" width="4" height="4" viewBox="0 0 4 4"><circle cx="2" cy="2" r="1.95" fill="#444"/></svg>
<span class="t" style="left:466.8px;top:140px;font-size:7.6px;line-height:9px;color:#3a3a3a;">Empty</span>
<span class="t tr" style="left:552.7px;top:140px;font-size:7.6px;line-height:9px;color:#3a3a3a;">0%</span>
<svg style="left:559.3px;top:100.8px" width="12" height="11" viewBox="0 0 12 11"><g fill="#fff" stroke="#fff" stroke-width="0.25" font-family="Liberation Sans, sans-serif"><text x="0" y="6.800" font-size="5.900">A</text><text x="4" y="4" font-size="4.500">B</text><text x="6.500" y="8.500" font-size="5.700">C</text></g></svg>
<span class="t" style="left:574.3px;top:102px;font-size:7.6px;line-height:9px;color:#fff;font-weight:700;transform:scaleX(0.8949);transform-origin:0 0;-webkit-text-stroke:0;">Gender</span>
<div class="b" style="left:650.3px;top:100px;width:10.2px;height:9.9px;background:#fff;"></div>
<svg style="left:652.5px;top:104px" width="6" height="4" viewBox="0 0 6 4"><path d="M0.3 0.3h5L2.8 3.2z" fill="#333"/></svg>
<svg style="left:563.2px;top:121.4px" width="4" height="4" viewBox="0 0 4 4"><circle cx="2" cy="2" r="1.95" fill="#1c9b45"/></svg>
<span class="t" style="left:571.3px;top:119px;font-size:7.6px;line-height:9px;color:#3a3a3a;">Valid</span>
<span class="t tr" style="left:657.2px;top:119px;font-size:7.6px;line-height:9px;color:#3a3a3a;">100%</span>
<svg style="left:563.2px;top:131.9px" width="4" height="4" viewBox="0 0 4 4"><circle cx="2" cy="2" r="1.95" fill="#e8475f"/></svg>
<span class="t" style="left:571.3px;top:130px;font-size:7.6px;line-height:9px;color:#3a3a3a;">Error</span>
<span class="t tr" style="left:657.2px;top:130px;font-size:7.6px;line-height:9px;color:#3a3a3a;">0%</span>
<svg style="left:563.2px;top:142.4px" width="4" height="4" viewBox="0 0 4 4"><circle cx="2" cy="2" r="1.95" fill="#444"/></svg>
<span class="t" style="left:571.3px;top:140px;font-size:7.6px;line-height:9px;color:#3a3a3a;">Empty</span>
<span class="t tr" style="left:657.2px;top:140px;font-size:7.6px;line-height:9px;color:#3a3a3a;">0%</span>
<svg style="left:663.8px;top:100.8px" width="12" height="11" viewBox="0 0 12 11"><g fill="#fff" stroke="#fff" stroke-width="0.25" font-family="Liberation Sans, sans-serif"><text x="0" y="6.800" font-size="5.900">A</text><text x="4" y="4" font-size="4.500">B</text><text x="6.500" y="8.500" font-size="5.700">C</text></g></svg>
<span class="t" style="left:679px;top:102px;font-size:7.6px;line-height:9px;color:#fff;font-weight:700;transform:scaleX(0.9022);transform-origin:0 0;-webkit-text-stroke:0;">Product line</span>
<div class="b" style="left:754.8px;top:100px;width:10.2px;height:9.9px;background:#fff;"></div>
<svg style="left:757px;top:104px" width="6" height="4" viewBox="0 0 6 4"><path d="M0.3 0.3h5L2.8 3.2z" fill="#333"/></svg>
<svg style="left:667.7px;top:121.4px" width="4" height="4" viewBox="0 0 4 4"><circle cx="2" cy="2" r="1.95" fill="#1c9b45"/></svg>
<span class="t" style="left:675.8px;top:119px;font-size:7.6px;line-height:9px;color:#3a3a3a;">Valid</span>
<span class="t tr" style="left:761.7px;top:119px;font-size:7.6px;line-height:9px;color:#3a3a3a;">100%</span>
<svg style="left:667.7px;top:131.9px" width="4" height="4" viewBox="0 0 4 4"><circle cx="2" cy="2" r="1.95" fill="#e8475f"/></svg>
<span class="t" style="left:675.8px;top:130px;font-size:7.6px;line-height:9px;color:#3a3a3a;">Error</span>
<span class="t tr" style="left:761.7px;top:130px;font-size:7.6px;line-height:9px;color:#3a3a3a;">0%</span>
<svg style="left:667.7px;top:142.4px" width="4" height="4" viewBox="0 0 4 4"><circle cx="2" cy="2" r="1.95" fill="#444"/></svg>
<span class="t" style="left:675.8px;top:140px;font-size:7.6px;line-height:9px;color:#3a3a3a;">Empty</span>
<span class="t tr" style="left:761.7px;top:140px;font-size:7.6px;line-height:9px;color:#3a3a3a;">0%</span>
<span class="t" style="left:769.5px;top:101px;font-size:9.2px;line-height:10px;color:#fff;transform:scaleX(0.7511);transform-origin:0 0;-webkit-text-stroke:0.1px currentColor;">1.2</span>
<span class="t" style="left:783.7px;top:102px;font-size:7.6px;line-height:9px;color:#fff;font-weight:700;transform:scaleX(0.9135);transform-origin:0 0;-webkit-text-stroke:0;">Unit price</span>
<svg style="left:772.2px;top:121.4px" width="4" height="4" viewBox="0 0 4 4"><circle cx="2" cy="2" r="1.95" fill="#1c9b45"/></svg>
<span class="t" style="left:780.3px;top:119px;font-size:7.6px;line-height:9px;color:#3a3a3a;">Valid</span>
<svg style="left:772.2px;top:131.9px" width="4" height="4" viewBox="0 0 4 4"><circle cx="2" cy="2" r="1.95" fill="#e8475f"/></svg>
<span class="t" style="left:780.3px;top:130px;font-size:7.6px;line-height:9px;color:#3a3a3a;">Error</span>
<svg style="left:772.2px;top:142.4px" width="4" height="4" viewBox="0 0 4 4"><circle cx="2" cy="2" r="1.95" fill="#444"/></svg>
<span class="t" style="left:780.3px;top:140px;font-size:7.6px;line-height:9px;color:#3a3a3a;">Empty</span>
<span class="t tc" style="left:130.3px;top:154px;font-size:8.2px;line-height:9px;color:#fff;-webkit-text-stroke:0.1px currentColor;">1</span>
<span class="t" style="left:142px;top:155px;font-size:7.1px;line-height:8px;color:#222;letter-spacing:0.035px;">750-67-8428</span>
<span class="t" style="left:246.6px;top:155px;font-size:7.1px;line-height:8px;color:#222;">A</span>
<span class="t" style="left:351.4px;top:155px;font-size:7.1px;line-height:8px;color:#222;letter-spacing:-0.061px;">Yangon</span>
<span class="t" style="left:456px;top:155px;font-size:7.1px;line-height:8px;color:#222;letter-spacing:0.303px;">Member</span>
<span class="t" style="left:561px;top:155px;font-size:7.1px;line-height:8px;color:#222;letter-spacing:-0.192px;">Female</span>
<span class="t" style="left:665.5px;top:155px;font-size:7.1px;line-height:8px;color:#222;letter-spacing:0.055px;">Health and beauty</span>
<span class="t tc" style="left:130.3px;top:168px;font-size:8.2px;line-height:9px;color:#fff;-webkit-text-stroke:0.1px currentColor;">2</span>
<span class="t" style="left:142px;top:169px;font-size:7.1px;line-height:8px;color:#222;letter-spacing:0.035px;">226-31-3081</span>
<span class="t" style="left:246.6px;top:169px;font-size:7.1px;line-height:8px;color:#222;">C</span>
<span class="t" style="left:351.4px;top:169px;font-size:7.1px;line-height:8px;color:#222;letter-spacing:0.114px;">Naypyitaw</span>
<span class="t" style="left:456px;top:169px;font-size:7.1px;line-height:8px;color:#222;letter-spacing:0.168px;">Normal</span>
<span class="t" style="left:561px;top:169px;font-size:7.1px;line-height:8px;color:#222;letter-spacing:-0.192px;">Female</span>
<span class="t" style="left:665.5px;top:169px;font-size:7.1px;line-height:8px;color:#222;letter-spacing:-0.073px;">Electronic accessories</span>
<span class="t tc" style="left:130.3px;top:182px;font-size:8.2px;line-height:9px;color:#fff;-webkit-text-stroke:0.1px currentColor;">3</span>
<span class="t" style="left:142px;top:182px;font-size:7.1px;line-height:8px;color:#222;letter-spacing:0.035px;">631-41-3108</span>
<span class="t" style="left:246.6px;top:182px;font-size:7.1px;line-height:8px;color:#222;">A</span>
<span class="t" style="left:351.4px;top:182px;font-size:7.1px;line-height:8px;color:#222;letter-spacing:-0.061px;">Yangon</span>
<span class="t" style="left:456px;top:182px;font-size:7.1px;line-height:8px;color:#222;letter-spacing:0.168px;">Normal</span>
<span class="t" style="left:561px;top:182px;font-size:7.1px;line-height:8px;color:#222;letter-spacing:0.06px;">Male</span>
<span class="t" style="left:665.5px;top:182px;font-size:7.1px;line-height:8px;color:#222;letter-spacing:0.077px;">Home and lifestyle</span>
<span class="t tc" style="left:130.3px;top:196px;font-size:8.2px;line-height:9px;color:#fff;-webkit-text-stroke:0.1px currentColor;">4</span>
<span class="t" style="left:142px;top:196px;font-size:7.1px;line-height:8px;color:#222;letter-spacing:0.084px;">123-19-1176</span>
<span class="t" style="left:246.6px;top:196px;font-size:7.1px;line-height:8px;color:#222;">A</span>
<span class="t" style="left:351.4px;top:196px;font-size:7.1px;line-height:8px;color:#222;letter-spacing:-0.061px;">Yangon</span>
<span class="t" style="left:456px;top:196px;font-size:7.1px;line-height:8px;color:#222;letter-spacing:0.303px;">Member</span>
<span class="t" style="left:561px;top:196px;font-size:7.1px;line-height:8px;color:#222;letter-spacing:0.06px;">Male</span>
<span class="t" style="left:665.5px;top:196px;font-size:7.1px;line-height:8px;color:#222;letter-spacing:0.055px;">Health and beauty</span>
<span class="t tc" style="left:130.3px;top:209px;font-size:8.2px;line-height:9px;color:#fff;-webkit-text-stroke:0.1px currentColor;">5</span>
<span class="t" style="left:142px;top:210px;font-size:7.1px;line-height:8px;color:#222;letter-spacing:0.035px;">373-73-7910</span>
<span class="t" style="left:246.6px;top:210px;font-size:7.1px;line-height:8px;color:#222;">A</span>
<span class="t" style="left:351.4px;top:210px;font-size:7.1px;line-height:8px;color:#222;letter-spacing:-0.061px;">Yangon</span>
<span class="t" style="left:456px;top:210px;font-size:7.1px;line-height:8px;color:#222;letter-spacing:0.168px;">Normal</span>
<span class="t" style="left:561px;top:210px;font-size:7.1px;line-height:8px;color:#222;letter-spacing:0.06px;">Male</span>
<span class="t" style="left:665.5px;top:210px;font-size:7.1px;line-height:8px;color:#222;letter-spacing:0.01px;">Sports and travel</span>
<span class="t tc" style="left:130.3px;top:223px;font-size:8.2px;line-height:9px;color:#fff;-webkit-text-stroke:0.1px currentColor;">6</span>
<span class="t" style="left:142px;top:224px;font-size:7.1px;line-height:8px;color:#222;letter-spacing:0.035px;">699-14-3026</span>
<span class="t" style="left:246.6px;top:224px;font-size:7.1px;line-height:8px;color:#222;">C</span>
<span class="t" style="left:351.4px;top:224px;font-size:7.1px;line-height:8px;color:#222;letter-spacing:0.114px;">Naypyitaw</span>
<span class="t" style="left:456px;top:224px;font-size:7.1px;line-height:8px;color:#222;letter-spacing:0.168px;">Normal</span>
<span class="t" style="left:561px;top:224px;font-size:7.1px;line-height:8px;color:#222;letter-spacing:0.06px;">Male</span>
<span class="t" style="left:665.5px;top:224px;font-size:7.1px;line-height:8px;color:#222;letter-spacing:-0.073px;">Electronic accessories</span>
<span class="t tc" style="left:130.3px;top:237px;font-size:8.2px;line-height:9px;color:#fff;-webkit-text-stroke:0.1px currentColor;">7</span>
<span class="t" style="left:142px;top:237px;font-size:7.1px;line-height:8px;color:#222;letter-spacing:0.035px;">355-53-5943</span>
<span class="t" style="left:246.6px;top:237px;font-size:7.1px;line-height:8px;color:#222;">A</span>
<span class="t" style="left:351.4px;top:237px;font-size:7.1px;line-height:8px;color:#222;letter-spacing:-0.061px;">Yangon</span>
<span class="t" style="left:456px;top:237px;font-size:7.1px;line-height:8px;color:#222;letter-spacing:0.303px;">Member</span>
<span class="t" style="left:561px;top:237px;font-size:7.1px;line-height:8px;color:#222;letter-spacing:-0.192px;">Female</span>
<span class="t" style="left:665.5px;top:237px;font-size:7.1px;line-height:8px;color:#222;letter-spacing:-0.073px;">Electronic accessories</span>
<span class="t tc" style="left:130.3px;top:251px;font-size:8.2px;line-height:9px;color:#fff;-webkit-text-stroke:0.1px currentColor;">8</span>
<span class="t" style="left:142px;top:251px;font-size:7.1px;line-height:8px;color:#222;letter-spacing:0.035px;">315-22-5665</span>
<span class="t" style="left:246.6px;top:251px;font-size:7.1px;line-height:8px;color:#222;">C</span>
<span class="t" style="left:351.4px;top:251px;font-size:7.1px;line-height:8px;color:#222;letter-spacing:0.114px;">Naypyitaw</span>
<span class="t" style="left:456px;top:251px;font-size:7.1px;line-height:8px;color:#222;letter-spacing:0.168px;">Normal</span>
<span class="t" style="left:561px;top:251px;font-size:7.1px;line-height:8px;color:#222;letter-spacing:-0.192px;">Female</span>
<span class="t" style="left:665.5px;top:251px;font-size:7.1px;line-height:8px;color:#222;letter-spacing:0.077px;">Home and lifestyle</span>
<span class="t tc" style="left:130.3px;top:264px;font-size:8.2px;line-height:9px;color:#fff;-webkit-text-stroke:0.1px currentColor;">9</span>
<span class="t" style="left:142px;top:265px;font-size:7.1px;line-height:8px;color:#222;letter-spacing:0.035px;">665-32-9167</span>
<span class="t" style="left:246.6px;top:265px;font-size:7.1px;line-height:8px;color:#222;">A</span>
<span class="t" style="left:351.4px;top:265px;font-size:7.1px;line-height:8px;color:#222;letter-spacing:-0.061px;">Yangon</span>
<span class="t" style="left:456px;top:265px;font-size:7.1px;line-height:8px;color:#222;letter-spacing:0.303px;">Member</span>
<span class="t" style="left:561px;top:265px;font-size:7.1px;line-height:8px;color:#222;letter-spacing:-0.192px;">Female</span>
<span class="t" style="left:665.5px;top:265px;font-size:7.1px;line-height:8px;color:#222;letter-spacing:0.055px;">Health and beauty</span>
<span class="t tc" style="left:130.3px;top:278px;font-size:8.2px;line-height:9px;color:#fff;-webkit-text-stroke:0.1px currentColor;">10</span>
<span class="t" style="left:142px;top:279px;font-size:7.1px;line-height:8px;color:#222;letter-spacing:0.035px;">692-92-5582</span>
<span class="t" style="left:246.6px;top:279px;font-size:7.1px;line-height:8px;color:#222;">B</span>
<span class="t" style="left:351.4px;top:279px;font-size:7.1px;line-height:8px;color:#222;letter-spacing:0.098px;">Mandalay</span>
<span class="t" style="left:456px;top:279px;font-size:7.1px;line-height:8px;color:#222;letter-spacing:0.303px;">Member</span>
<span class="t" style="left:561px;top:279px;font-size:7.1px;line-height:8px;color:#222;letter-spacing:-0.192px;">Female</span>
<span class="t" style="left:665.5px;top:279px;font-size:7.1px;line-height:8px;color:#222;letter-spacing:-0.062px;">Food and beverages</span>
<span class="t tc" style="left:130.3px;top:292px;font-size:8.2px;line-height:9px;color:#fff;-webkit-text-stroke:0.1px currentColor;">11</span>
<span class="t" style="left:142px;top:292px;font-size:7.1px;line-height:8px;color:#222;letter-spacing:0.035px;">351-62-0822</span>
<span class="t" style="left:246.6px;top:292px;font-size:7.1px;line-height:8px;color:#222;">B</span>
<span class="t" style="left:351.4px;top:292px;font-size:7.1px;line-height:8px;color:#222;letter-spacing:0.098px;">Mandalay</span>
<span class="t" style="left:456px;top:292px;font-size:7.1px;line-height:8px;color:#222;letter-spacing:0.303px;">Member</span>
<span class="t" style="left:561px;top:292px;font-size:7.1px;line-height:8px;color:#222;letter-spacing:-0.192px;">Female</span>
<span class="t" style="left:665.5px;top:292px;font-size:7.1px;line-height:8px;color:#222;letter-spacing:-0.144px;">Fashion accessories</span>
<span class="t tc" style="left:130.3px;top:305px;font-size:8.2px;line-height:9px;color:#fff;-webkit-text-stroke:0.1px currentColor;">12</span>
<span class="t" style="left:142px;top:306px;font-size:7.1px;line-height:8px;color:#222;letter-spacing:0.035px;">529-56-3974</span>
<span class="t" style="left:246.6px;top:306px;font-size:7.1px;line-height:8px;color:#222;">B</span>
<span class="t" style="left:351.4px;top:306px;font-size:7.1px;line-height:8px;color:#222;letter-spacing:0.098px;">Mandalay</span>
<span class="t" style="left:456px;top:306px;font-size:7.1px;line-height:8px;color:#222;letter-spacing:0.303px;">Member</span>
<span class="t" style="left:561px;top:306px;font-size:7.1px;line-height:8px;color:#222;letter-spacing:0.06px;">Male</span>
<span class="t" style="left:665.5px;top:306px;font-size:7.1px;line-height:8px;color:#222;letter-spacing:-0.073px;">Electronic accessories</span>
<span class="t tc" style="left:130.3px;top:319px;font-size:8.2px;line-height:9px;color:#fff;-webkit-text-stroke:0.1px currentColor;">13</span>
<span class="t" style="left:142px;top:320px;font-size:7.1px;line-height:8px;color:#222;letter-spacing:0.035px;">365-64-0515</span>
<span class="t" style="left:246.6px;top:320px;font-size:7.1px;line-height:8px;color:#222;">A</span>
<span class="t" style="left:351.4px;top:320px;font-size:7.1px;line-height:8px;color:#222;letter-spacing:-0.061px;">Yangon</span>
<span class="t" style="left:456px;top:320px;font-size:7.1px;line-height:8px;color:#222;letter-spacing:0.168px;">Normal</span>
<span class="t" style="left:561px;top:320px;font-size:7.1px;line-height:8px;color:#222;letter-spacing:-0.192px;">Female</span>
<span class="t" style="left:665.5px;top:320px;font-size:7.1px;line-height:8px;color:#222;letter-spacing:-0.073px;">Electronic accessories</span>
<span class="t tc" style="left:130.3px;top:333px;font-size:8.2px;line-height:9px;color:#fff;-webkit-text-stroke:0.1px currentColor;">14</span>
<span class="t" style="left:142px;top:334px;font-size:7.1px;line-height:8px;color:#222;letter-spacing:0.035px;">252-56-2699</span>
<span class="t" style="left:246.6px;top:334px;font-size:7.1px;line-height:8px;color:#222;">A</span>
<span class="t" style="left:351.4px;top:334px;font-size:7.1px;line-height:8px;color:#222;letter-spacing:-0.061px;">Yangon</span>
<span class="t" style="left:456px;top:334px;font-size:7.1px;line-height:8px;color:#222;letter-spacing:0.168px;">Normal</span>
<span class="t" style="left:561px;top:334px;font-size:7.1px;line-height:8px;color:#222;letter-spacing:0.06px;">Male</span>
<span class="t" style="left:665.5px;top:334px;font-size:7.1px;line-height:8px;color:#222;letter-spacing:-0.062px;">Food and beverages</span>
<span class="t tc" style="left:130.3px;top:347px;font-size:8.2px;line-height:9px;color:#fff;-webkit-text-stroke:0.1px currentColor;">15</span>
<span class="t" style="left:142px;top:347px;font-size:7.1px;line-height:8px;color:#222;letter-spacing:0.035px;">829-34-3910</span>
<span class="t" style="left:246.6px;top:347px;font-size:7.1px;line-height:8px;color:#222;">A</span>
<span class="t" style="left:351.4px;top:347px;font-size:7.1px;line-height:8px;color:#222;letter-spacing:-0.061px;">Yangon</span>
<span class="t" style="left:456px;top:347px;font-size:7.1px;line-height:8px;color:#222;letter-spacing:0.168px;">Normal</span>
<span class="t" style="left:561px;top:347px;font-size:7.1px;line-height:8px;color:#222;letter-spacing:-0.192px;">Female</span>
<span class="t" style="left:665.5px;top:347px;font-size:7.1px;line-height:8px;color:#222;letter-spacing:0.055px;">Health and beauty</span>
<span class="t tc" style="left:130.3px;top:360px;font-size:8.2px;line-height:9px;color:#fff;-webkit-text-stroke:0.1px currentColor;">16</span>
<span class="t" style="left:142px;top:361px;font-size:7.1px;line-height:8px;color:#222;letter-spacing:0.035px;">299-46-1805</span>
<span class="t" style="left:246.6px;top:361px;font-size:7.1px;line-height:8px;color:#222;">B</span>
<span class="t" style="left:351.4px;top:361px;font-size:7.1px;line-height:8px;color:#222;letter-spacing:0.098px;">Mandalay</span>
<span class="t" style="left:456px;top:361px;font-size:7.1px;line-height:8px;color:#222;letter-spacing:0.303px;">Member</span>
<span class="t" style="left:561px;top:361px;font-size:7.1px;line-height:8px;color:#222;letter-spacing:-0.192px;">Female</span>
<span class="t" style="left:665.5px;top:361px;font-size:7.1px;line-height:8px;color:#222;letter-spacing:0.01px;">Sports and travel</span>
<span class="t tc" style="left:130.3px;top:374px;font-size:8.2px;line-height:9px;color:#fff;-webkit-text-stroke:0.1px currentColor;">17</span>
<span class="t" style="left:142px;top:375px;font-size:7.1px;line-height:8px;color:#222;letter-spacing:0.035px;">656-95-9349</span>
<span class="t" style="left:246.6px;top:375px;font-size:7.1px;line-height:8px;color:#222;">A</span>
<span class="t" style="left:351.4px;top:375px;font-size:7.1px;line-height:8px;color:#222;letter-spacing:-0.061px;">Yangon</span>
<span class="t" style="left:456px;top:375px;font-size:7.1px;line-height:8px;color:#222;letter-spacing:0.303px;">Member</span>
<span class="t" style="left:561px;top:375px;font-size:7.1px;line-height:8px;color:#222;letter-spacing:-0.192px;">Female</span>
<span class="t" style="left:665.5px;top:375px;font-size:7.1px;line-height:8px;color:#222;letter-spacing:0.055px;">Health and beauty</span>
<span class="t tc" style="left:130.3px;top:388px;font-size:8.2px;line-height:9px;color:#fff;-webkit-text-stroke:0.1px currentColor;">18</span>
<span class="t" style="left:142px;top:389px;font-size:7.1px;line-height:8px;color:#222;letter-spacing:0.035px;">765-26-6951</span>
<span class="t" style="left:246.6px;top:389px;font-size:7.1px;line-height:8px;color:#222;">A</span>
<span class="t" style="left:351.4px;top:389px;font-size:7.1px;line-height:8px;color:#222;letter-spacing:-0.061px;">Yangon</span>
<span class="t" style="left:456px;top:389px;font-size:7.1px;line-height:8px;color:#222;letter-spacing:0.168px;">Normal</span>
<span class="t" style="left:561px;top:389px;font-size:7.1px;line-height:8px;color:#222;letter-spacing:0.06px;">Male</span>
<span class="t" style="left:665.5px;top:389px;font-size:7.1px;line-height:8px;color:#222;letter-spacing:0.01px;">Sports and travel</span>
<span class="t tc" style="left:130.3px;top:402px;font-size:8.2px;line-height:9px;color:#fff;-webkit-text-stroke:0.1px currentColor;">19</span>
<span class="t" style="left:142px;top:402px;font-size:7.1px;line-height:8px;color:#222;letter-spacing:0.035px;">329-62-1586</span>
<span class="t" style="left:246.6px;top:402px;font-size:7.1px;line-height:8px;color:#222;">A</span>
<span class="t" style="left:351.4px;top:402px;font-size:7.1px;line-height:8px;color:#222;letter-spacing:-0.061px;">Yangon</span>
<span class="t" style="left:456px;top:402px;font-size:7.1px;line-height:8px;color:#222;letter-spacing:0.168px;">Normal</span>
<span class="t" style="left:561px;top:402px;font-size:7.1px;line-height:8px;color:#222;letter-spacing:0.06px;">Male</span>
<span class="t" style="left:665.5px;top:402px;font-size:7.1px;line-height:8px;color:#222;letter-spacing:-0.062px;">Food and beverages</span>
<span class="t tc" style="left:130.3px;top:415px;font-size:8.2px;line-height:9px;color:#fff;-webkit-text-stroke:0.1px currentColor;">20</span>
<span class="t" style="left:142px;top:416px;font-size:7.1px;line-height:8px;color:#222;letter-spacing:0.035px;">319-50-3348</span>
<span class="t" style="left:246.6px;top:416px;font-size:7.1px;line-height:8px;color:#222;">B</span>
<span class="t" style="left:351.4px;top:416px;font-size:7.1px;line-height:8px;color:#222;letter-spacing:0.098px;">Mandalay</span>
<span class="t" style="left:456px;top:416px;font-size:7.1px;line-height:8px;color:#222;letter-spacing:0.168px;">Normal</span>
<span class="t" style="left:561px;top:416px;font-size:7.1px;line-height:8px;color:#222;letter-spacing:-0.192px;">Female</span>
<span class="t" style="left:665.5px;top:416px;font-size:7.1px;line-height:8px;color:#222;letter-spacing:0.077px;">Home and lifestyle</span>
<span class="t tc" style="left:130.3px;top:429px;font-size:8.2px;line-height:9px;color:#fff;-webkit-text-stroke:0.1px currentColor;">21</span>
<span class="t" style="left:142px;top:430px;font-size:7.1px;line-height:8px;color:#222;letter-spacing:0.035px;">300-71-4605</span>
<span class="t" style="left:246.6px;top:430px;font-size:7.1px;line-height:8px;color:#222;">C</span>
<span class="t" style="left:351.4px;top:430px;font-size:7.1px;line-height:8px;color:#222;letter-spacing:0.114px;">Naypyitaw</span>
<span class="t" style="left:456px;top:430px;font-size:7.1px;line-height:8px;color:#222;letter-spacing:0.303px;">Member</span>
<span class="t" style="left:561px;top:430px;font-size:7.1px;line-height:8px;color:#222;letter-spacing:0.06px;">Male</span>
<span class="t" style="left:665.5px;top:430px;font-size:7.1px;line-height:8px;color:#222;letter-spacing:-0.073px;">Electronic accessories</span>
<span class="t tc" style="left:130.3px;top:443px;font-size:8.2px;line-height:9px;color:#fff;-webkit-text-stroke:0.1px currentColor;">22</span>
<span class="t" style="left:142px;top:444px;font-size:7.1px;line-height:8px;color:#222;letter-spacing:0.035px;">371-85-5789</span>
<span class="t" style="left:246.6px;top:444px;font-size:7.1px;line-height:8px;color:#222;">B</span>
<span class="t" style="left:351.4px;top:444px;font-size:7.1px;line-height:8px;color:#222;letter-spacing:0.098px;">Mandalay</span>
<span class="t" style="left:456px;top:444px;font-size:7.1px;line-height:8px;color:#222;letter-spacing:0.168px;">Normal</span>
<span class="t" style="left:561px;top:444px;font-size:7.1px;line-height:8px;color:#222;letter-spacing:0.06px;">Male</span>
<span class="t" style="left:665.5px;top:444px;font-size:7.1px;line-height:8px;color:#222;letter-spacing:0.055px;">Health and beauty</span>
<span class="t tc" style="left:130.3px;top:457px;font-size:8.2px;line-height:9px;color:#fff;-webkit-text-stroke:0.1px currentColor;">23</span>
<span class="t" style="left:142px;top:457px;font-size:7.1px;line-height:8px;color:#222;letter-spacing:0.035px;">273-16-6619</span>
<span class="t" style="left:246.6px;top:457px;font-size:7.1px;line-height:8px;color:#222;">B</span>
<span class="t" style="left:351.4px;top:457px;font-size:7.1px;line-height:8px;color:#222;letter-spacing:0.098px;">Mandalay</span>
<span class="t" style="left:456px;top:457px;font-size:7.1px;line-height:8px;color:#222;letter-spacing:0.168px;">Normal</span>
<span class="t" style="left:561px;top:457px;font-size:7.1px;line-height:8px;color:#222;letter-spacing:0.06px;">Male</span>
<span class="t" style="left:665.5px;top:457px;font-size:7.1px;line-height:8px;color:#222;letter-spacing:0.077px;">Home and lifestyle</span>
<span class="t tc" style="left:130.3px;top:470px;font-size:8.2px;line-height:9px;color:#fff;-webkit-text-stroke:0.1px currentColor;">24</span>
<span class="t" style="left:142px;top:471px;font-size:7.1px;line-height:8px;color:#222;letter-spacing:0.035px;">636-48-8204</span>
<span class="t" style="left:246.6px;top:471px;font-size:7.1px;line-height:8px;color:#222;">A</span>
<span class="t" style="left:351.4px;top:471px;font-size:7.1px;line-height:8px;color:#222;letter-spacing:-0.061px;">Yangon</span>
<span class="t" style="left:456px;top:471px;font-size:7.1px;line-height:8px;color:#222;letter-spacing:0.168px;">Normal</span>
<span class="t" style="left:561px;top:471px;font-size:7.1px;line-height:8px;color:#222;letter-spacing:0.06px;">Male</span>
<span class="t" style="left:665.5px;top:471px;font-size:7.1px;line-height:8px;color:#222;letter-spacing:-0.073px;">Electronic accessories</span>
<span class="t tc" style="left:130.3px;top:484px;font-size:8.2px;line-height:9px;color:#fff;-webkit-text-stroke:0.1px currentColor;">25</span>
<span class="t" style="left:142px;top:485px;font-size:7.1px;line-height:8px;color:#222;letter-spacing:0.035px;">549-59-1358</span>
<span class="t" style="left:246.6px;top:485px;font-size:7.1px;line-height:8px;color:#222;">A</span>
<span class="t" style="left:351.4px;top:485px;font-size:7.1px;line-height:8px;color:#222;letter-spacing:-0.061px;">Yangon</span>
<span class="t" style="left:456px;top:485px;font-size:7.1px;line-height:8px;color:#222;letter-spacing:0.303px;">Member</span>
<span class="t" style="left:561px;top:485px;font-size:7.1px;line-height:8px;color:#222;letter-spacing:0.06px;">Male</span>
<span class="t" style="left:665.5px;top:485px;font-size:7.1px;line-height:8px;color:#222;letter-spacing:0.01px;">Sports and travel</span>
<span class="t tc" style="left:130.3px;top:498px;font-size:8.2px;line-height:9px;color:#fff;-webkit-text-stroke:0.1px currentColor;">26</span>
<span class="t" style="left:142px;top:498px;font-size:7.1px;line-height:8px;color:#222;letter-spacing:0.035px;">227-03-5010</span>
<span class="t" style="left:246.6px;top:498px;font-size:7.1px;line-height:8px;color:#222;">A</span>
<span class="t" style="left:351.4px;top:498px;font-size:7.1px;line-height:8px;color:#222;letter-spacing:-0.061px;">Yangon</span>
<span class="t" style="left:456px;top:498px;font-size:7.1px;line-height:8px;color:#222;letter-spacing:0.303px;">Member</span>
<span class="t" style="left:561px;top:498px;font-size:7.1px;line-height:8px;color:#222;letter-spacing:-0.192px;">Female</span>
<span class="t" style="left:665.5px;top:498px;font-size:7.1px;line-height:8px;color:#222;letter-spacing:0.077px;">Home and lifestyle</span>
<span class="t tc" style="left:130.3px;top:512px;font-size:8.2px;line-height:9px;color:#fff;-webkit-text-stroke:0.1px currentColor;">27</span>
<span class="t" style="left:142px;top:512px;font-size:7.1px;line-height:8px;color:#222;letter-spacing:0.035px;">649-29-6775</span>
<span class="t" style="left:246.6px;top:512px;font-size:7.1px;line-height:8px;color:#222;">B</span>
<span class="t" style="left:351.4px;top:512px;font-size:7.1px;line-height:8px;color:#222;letter-spacing:0.098px;">Mandalay</span>
<span class="t" style="left:456px;top:512px;font-size:7.1px;line-height:8px;color:#222;letter-spacing:0.168px;">Normal</span>
<span class="t" style="left:561px;top:512px;font-size:7.1px;line-height:8px;color:#222;letter-spacing:0.06px;">Male</span>
<span class="t" style="left:665.5px;top:512px;font-size:7.1px;line-height:8px;color:#222;letter-spacing:-0.144px;">Fashion accessories</span>
<span class="t tc" style="left:130.3px;top:525px;font-size:8.2px;line-height:9px;color:#fff;-webkit-text-stroke:0.1px currentColor;">28</span>
<span class="t" style="left:142px;top:526px;font-size:7.1px;line-height:8px;color:#222;letter-spacing:0.035px;">189-17-4241</span>
<span class="t" style="left:246.6px;top:526px;font-size:7.1px;line-height:8px;color:#222;">A</span>
<span class="t" style="left:351.4px;top:526px;font-size:7.1px;line-height:8px;color:#222;letter-spacing:-0.061px;">Yangon</span>
<span class="t" style="left:456px;top:526px;font-size:7.1px;line-height:8px;color:#222;letter-spacing:0.168px;">Normal</span>
<span class="t" style="left:561px;top:526px;font-size:7.1px;line-height:8px;color:#222;letter-spacing:-0.192px;">Female</span>
<span class="t" style="left:665.5px;top:526px;font-size:7.1px;line-height:8px;color:#222;letter-spacing:-0.144px;">Fashion accessories</span>
<div class="b" style="left:812.4px;top:151.6px;width:11.2px;height:386.4px;background:#fff;"></div>
<div class="b" style="left:813.4px;top:151.6px;width:8.8px;height:386.4px;background:#efefef;"></div>
<div class="b" style="left:813.4px;top:174.2px;width:8.8px;height:188.3px;background:#cbcbcb;"></div>
<svg style="left:814.2px;top:162.6px" width="8" height="6" viewBox="0 0 8 6"><path d="M0.400 5.300L3.900 1.100L7.400 5.300" fill="none" stroke="#1a1a1a" stroke-width="1.300"/></svg>
<svg style="left:814.2px;top:519.2px" width="8" height="6" viewBox="0 0 8 6"><path d="M0.400 0.600L3.900 4.900L7.400 0.600" fill="none" stroke="#1a1a1a" stroke-width="1.300"/></svg>
<div class="b" style="left:139.8px;top:536.8px;width:673.4px;height:1.2px;background:#f0f0f0;"></div>
<div class="b" style="left:162px;top:537px;width:250px;height:1px;background:#c2c2c2;"></div>
<div class="b" style="left:823.6px;top:114px;width:2.7px;height:424px;background:#131313;"></div>
<div class="b" style="left:826.2px;top:90px;width:0.8px;height:448px;background:#404040;"></div>
<span class="t" style="left:836.2px;top:100px;font-size:14.4px;line-height:16px;color:#efefef;transform:scaleX(0.8436);transform-origin:0 0;-webkit-text-stroke:0;">Query Settings</span>
<svg style="left:976px;top:105px" width="8" height="8" viewBox="0 0 8 8"><path d="M0.4 0.4L7.3 7.3M7.3 0.4L0.4 7.3" stroke="#eee" stroke-width="0.9"/></svg>
<svg style="left:833.6px;top:130.8px" width="5" height="5" viewBox="0 0 5 5"><path d="M4.2 0.2V4.4H0z" fill="#e4e4e4"/></svg>
<span class="t" style="left:841.8px;top:128px;font-size:9px;line-height:10px;color:#fff;font-weight:700;transform:scaleX(0.7894);transform-origin:0 0;-webkit-text-stroke:0.15px currentColor;">PROPERTIES</span>
<span class="t" style="left:842px;top:142px;font-size:9px;line-height:10px;color:#f0f0f0;transform:scaleX(0.8744);transform-origin:0 0;">Name</span>
<div class="b" style="left:841.6px;top:152px;width:143px;height:15px;background:#383838;"></div>
<span class="t" style="left:845.6px;top:156px;font-size:7.7px;line-height:9px;color:#f0f0f0;transform:scaleX(0.9237);transform-origin:0 0;-webkit-text-stroke:0.1px currentColor;">supermarket_sales</span>
<span class="t" style="left:842px;top:173px;font-size:9px;line-height:10px;color:#f0f0f0;transform:scaleX(0.8593);transform-origin:0 0;">All Properties</span>
<svg style="left:833.6px;top:196.6px" width="5" height="5" viewBox="0 0 5 5"><path d="M4.2 0.2V4.4H0z" fill="#e4e4e4"/></svg>
<span class="t" style="left:842.2px;top:194px;font-size:9px;line-height:10px;color:#fff;font-weight:700;transform:scaleX(0.7914);transform-origin:0 0;-webkit-text-stroke:0.15px currentColor;">APPLIED STEPS</span>
<div class="b" style="left:841.6px;top:207.6px;width:142.6px;height:326.4px;background:#363636;border:1px solid #424242;box-sizing:border-box;"></div>
<span class="t" style="left:855.8px;top:211px;font-size:8.6px;line-height:10px;color:#f2f2f2;transform:scaleX(0.8629);transform-origin:0 0;-webkit-text-stroke:0.15px currentColor;">Source</span>
<svg style="left:971.6px;top:211.4px" width="8" height="8" viewBox="-4 -4 8 8"><g fill="#e6e6e6"><circle r="2.4"/><rect x="-0.95" y="-3.5" width="1.9" height="7" transform="rotate(0)"/><rect x="-0.95" y="-3.5" width="1.9" height="7" transform="rotate(60)"/><rect x="-0.95" y="-3.5" width="1.9" height="7" transform="rotate(120)"/></g><circle r="1.05" fill="#363636"/></svg>
<span class="t" style="left:855.8px;top:224px;font-size:8.6px;line-height:10px;color:#f2f2f2;transform:scaleX(0.9024);transform-origin:0 0;-webkit-text-stroke:0.15px currentColor;">Promoted Headers</span>
<svg style="left:971.6px;top:224.5px" width="8" height="8" viewBox="-4 -4 8 8"><g fill="#e6e6e6"><circle r="2.4"/><rect x="-0.95" y="-3.5" width="1.9" height="7" transform="rotate(0)"/><rect x="-0.95" y="-3.5" width="1.9" height="7" transform="rotate(60)"/><rect x="-0.95" y="-3.5" width="1.9" height="7" transform="rotate(120)"/></g><circle r="1.05" fill="#363636"/></svg>
<span class="t" style="left:855.8px;top:237px;font-size:8.6px;line-height:10px;color:#f2f2f2;transform:scaleX(0.8879);transform-origin:0 0;-webkit-text-stroke:0.15px currentColor;">Changed Type</span>
<span class="t" style="left:855.8px;top:250px;font-size:8.6px;line-height:10px;color:#f2f2f2;transform:scaleX(0.9145);transform-origin:0 0;-webkit-text-stroke:0.15px currentColor;">Duplicated Column</span>
<span class="t" style="left:855.8px;top:263px;font-size:8.6px;line-height:10px;color:#f2f2f2;transform:scaleX(0.8836);transform-origin:0 0;-webkit-text-stroke:0.15px currentColor;">Renamed Columns</span>
<span class="t" style="left:855.8px;top:276px;font-size:8.6px;line-height:10px;color:#f2f2f2;transform:scaleX(0.9123);transform-origin:0 0;-webkit-text-stroke:0.15px currentColor;">Duplicated Column1</span>
<span class="t" style="left:855.8px;top:289px;font-size:8.6px;line-height:10px;color:#f2f2f2;transform:scaleX(0.8871);transform-origin:0 0;-webkit-text-stroke:0.15px currentColor;">Renamed Columns1</span>
<span class="t" style="left:855.8px;top:303px;font-size:8.6px;line-height:10px;color:#f2f2f2;transform:scaleX(0.8908);transform-origin:0 0;-webkit-text-stroke:0.15px currentColor;">Extracted Year</span>
<div class="b" style="left:842.6px;top:314.3px;width:141.2px;height:12.4px;background:#3a9b67;"></div>
<svg style="left:845px;top:317.6px" width="6" height="6" viewBox="0 0 6 6"><path d="M0.3 0.3L5.7 5.7M5.7 0.3L0.3 5.7" stroke="#fff" stroke-width="1.2"/></svg>
<span class="t" style="left:855.8px;top:316px;font-size:8.6px;line-height:10px;color:#f2f2f2;transform:scaleX(0.9136);transform-origin:0 0;-webkit-text-stroke:0.15px currentColor;">Extracted Month Name</span>
<svg style="left:971.6px;top:316.2px" width="8" height="8" viewBox="-4 -4 8 8"><g fill="#bfe0cc"><circle r="2.4"/><rect x="-0.95" y="-3.5" width="1.9" height="7" transform="rotate(0)"/><rect x="-0.95" y="-3.5" width="1.9" height="7" transform="rotate(60)"/><rect x="-0.95" y="-3.5" width="1.9" height="7" transform="rotate(120)"/></g><circle r="1.05" fill="#3a9b67"/></svg>
<svg style="left:0px;top:482px" width="58" height="56" viewBox="0 0 58 56"><defs><filter id="wb" x="-10%" y="-10%" width="120%" height="120%"><feGaussianBlur stdDeviation="0.9"/></filter></defs><g filter="url(#wb)"><circle cx="28.7" cy="29" r="26.6" fill="#2a3038"/><circle cx="28.7" cy="29" r="25.2" fill="#606062" stroke="#4c6224" stroke-width="1.8"/><path d="M15.2 15.4q12-5.5 27.2-1.2q1.6 14-10.6 24.6q-17-8-16.6-23.400z" fill="#48691f" stroke="#8d918e" stroke-width="0.9"/><path d="M15.2 15.6q9 1.5 13.200 9.500t3.800 13.500q-17.500-8-17-23z" fill="#2d4a54"/><path d="M15.600 15.200q10.500 1.200 14.500 10t2.400 13.400" fill="none" stroke="#7d827f" stroke-width="1.1"/><path d="M42.400 14.200q2.200 13.500-10.400 24.600q9-11 8.800-24.800z" fill="#2d4a54"/><rect x="12.600" y="40.700" width="27" height="5.600" rx="1" fill="#454d58" opacity="0.85"/></g></svg>
</body></html>
